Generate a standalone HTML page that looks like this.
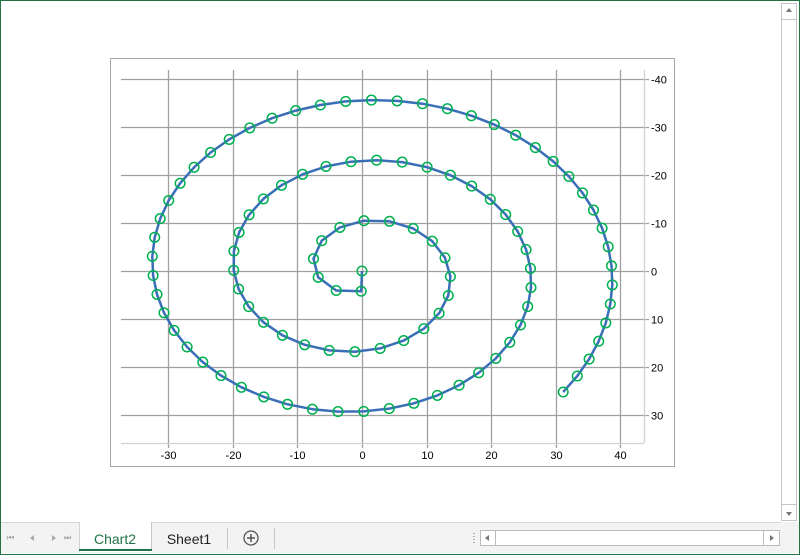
<!DOCTYPE html>
<html><head><meta charset="utf-8"><style>
html,body{margin:0;padding:0;width:800px;height:555px;overflow:hidden;background:#fff;font-family:"Liberation Sans",Arial,sans-serif}
.frame{position:absolute;left:0;top:0;width:798px;height:553px;border:1px solid #217346}
</style></head><body>
<div class="frame"></div>
<svg width="800" height="555" style="position:absolute;left:0;top:0" xmlns="http://www.w3.org/2000/svg">
<!-- vertical scrollbar -->
<rect x="781.5" y="3.5" width="15" height="517" fill="#fff" stroke="#c6c6c6"/>
<line x1="782" y1="19.5" x2="796" y2="19.5" stroke="#c6c6c6"/>
<line x1="782" y1="504.5" x2="796" y2="504.5" stroke="#c6c6c6"/>
<path d="M786 12 L792 12 L789 8 Z" fill="#777"/>
<path d="M786 512 L792 512 L789 516 Z" fill="#777"/>
<!-- tab bar -->
<rect x="1" y="522" width="798" height="31" fill="#f3f3f3"/>
<line x1="1" y1="522.5" x2="80" y2="522.5" stroke="#d4d4d4"/>
<line x1="152" y1="522.5" x2="780" y2="522.5" stroke="#d4d4d4"/>
<text x="7" y="540" font-size="8" fill="#999">⏮</text>
<path d="M30 538 L34 535 L34 541 Z" fill="#aaa"/>
<path d="M52 535 L52 541 L56 538 Z" fill="#aaa"/>
<text x="64" y="540" font-size="8" fill="#999">⏭</text>
<rect x="79" y="522" width="73" height="30" fill="#fff"/>
<line x1="79.5" y1="522" x2="79.5" y2="552" stroke="#d4d4d4"/>
<line x1="151.5" y1="522" x2="151.5" y2="550" stroke="#c6c6c6"/>
<line x1="79" y1="550" x2="152" y2="550" stroke="#217346" stroke-width="2"/>
<text x="115" y="544" font-size="14" fill="#217346" text-anchor="middle">Chart2</text>
<text x="189" y="544" font-size="14" fill="#222" text-anchor="middle">Sheet1</text>
<line x1="227.5" y1="528" x2="227.5" y2="549" stroke="#c6c6c6"/>
<circle cx="251" cy="538" r="7" fill="none" stroke="#555" stroke-width="1.3"/>
<path d="M247 538 H255 M251 534 V542" stroke="#555" stroke-width="1.5"/>
<line x1="274.5" y1="528" x2="274.5" y2="549" stroke="#c6c6c6"/>
<path d="M474 533 v1 M474 536 v1 M474 539 v1 M474 542 v1" stroke="#666"/>
<rect x="480.5" y="530.5" width="299" height="15" fill="#fff" stroke="#bbb"/>
<line x1="495.5" y1="531" x2="495.5" y2="545" stroke="#bbb"/>
<line x1="763.5" y1="531" x2="763.5" y2="545" stroke="#bbb"/>
<path d="M489 535 L485 538 L489 541 Z" fill="#777"/>
<path d="M770 535 L774 538 L770 541 Z" fill="#777"/>
<!-- chart -->
<rect x="110.5" y="58.5" width="564" height="408" fill="#fff" stroke="#a6a6a6"/>
<g id="grid" stroke="#a0a0a0" stroke-width="1.3"></g>
<g id="lbl" font-size="11" fill="#000"></g>
<g id="ser"></g>
</svg>
<script>
var ns="http://www.w3.org/2000/svg";
function el(p,t,a,txt){var e=document.createElementNS(ns,t);for(var k in a)e.setAttribute(k,a[k]);if(txt!=null)e.textContent=txt;document.getElementById(p).appendChild(e);return e;}
var X=function(x){return 362+x*6.46},Y=function(y){return 271+y*4.8};
for(var v=-30;v<=40;v+=10){var x=Math.round(X(v))+0.5;el('grid','line',{x1:x,y1:70,x2:x,y2:448});el('lbl','text',{x:x,y:459,'text-anchor':'middle'},String(v));}
for(var v=-40;v<=30;v+=10){var y=Math.round(Y(v))+0.5;el('grid','line',{x1:121,y1:y,x2:649,y2:y});el('lbl','text',{x:651,y:y+4},String(v));}
el('grid','line',{x1:121,y1:443.5,x2:644,y2:443.5,stroke:'#d0d0d0'});
el('grid','line',{x1:644.5,y1:70,x2:644.5,y2:443,stroke:'#d0d0d0'});
var b=2,off=-0.5,t0=2.1,t1=20.03;
function P(t){var r=b*t,p=t+off;return [r*Math.cos(p),r*Math.sin(p)];}
// arc length table
var ts=[],ss=[],s=0,dt=0.0005,prev=P(t0);
for(var t=t0;t<=t1+1e-9;t+=dt){var q=P(t);s+=Math.hypot(q[0]-prev[0],q[1]-prev[1]);prev=q;ts.push(t);ss.push(s);}
var n=Math.round(s/4),step=s/n,pts=[[0,0]],j=0;
for(var i=0;i<=n;i++){var target=i*step;while(j<ss.length-1&&ss[j]<target)j++;pts.push(P(ts[j]));}
var d=pts.map(function(p,i){return (i?'L':'M')+X(p[0]).toFixed(1)+' '+Y(p[1]).toFixed(1)}).join(' ');
el('ser','path',{d:d,fill:'none',stroke:'#3a6fb8','stroke-width':2.5,'stroke-linejoin':'round'});
pts.forEach(function(p){el('ser','circle',{cx:X(p[0]).toFixed(1),cy:Y(p[1]).toFixed(1),r:4.8,fill:'none',stroke:'#00b050','stroke-width':1.5});});
</script>
</body></html>
